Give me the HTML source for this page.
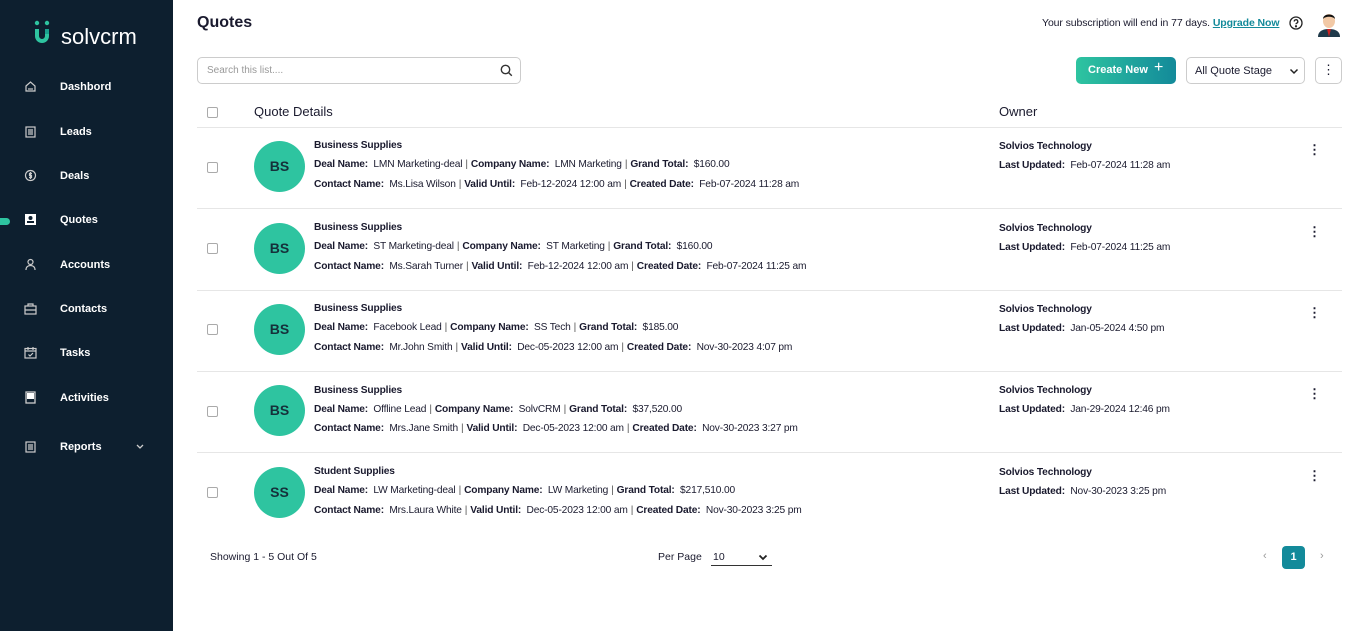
<!DOCTYPE html>
<html><head><meta charset="utf-8"><style>
*{box-sizing:border-box;margin:0;padding:0}
body{width:1364px;height:631px;overflow:hidden;font-family:"Liberation Sans",sans-serif;background:#fff;color:#1a1a2e;position:relative}
.sb{position:absolute;left:0;top:0;width:173px;height:631px;background:#0d1f2f}
.nav{position:absolute;left:0;width:173px;color:#fff;font-size:11px;font-weight:bold}
.nav span.t{position:absolute;left:60px;top:0}
.nav svg{position:absolute;left:24px;top:-1px}
.ind{position:absolute;left:-6px;top:218px;width:16px;height:7px;border-radius:4px;background:#2ec4a0}
.abs{position:absolute}
h1{position:absolute;left:197px;top:14px;font-size:16px;font-weight:bold}
.search{position:absolute;left:197px;top:57px;width:324px;height:27px;border:1px solid #ccc;border-radius:5px;font-size:10px;color:#999;padding:7px 9px}
.btn{position:absolute;left:1076px;top:57px;width:100px;height:27px;border-radius:5px;background:linear-gradient(90deg,#2ec4a0,#138a9a);color:#fff;font-size:11px;font-weight:bold;padding:7px 12px}
.sel{position:absolute;left:1186px;top:57px;width:119px;height:27px;border:1px solid #ccc;border-radius:5px;font-size:11px;padding:7px 8px}
.kb{position:absolute;left:1315px;top:57px;width:27px;height:27px;border:1px solid #ccc;border-radius:5px;text-align:center;font-size:13px;line-height:24px}
.cb{position:absolute;left:207px;width:11px;height:11px;border:1px solid #aaa;border-radius:2px}
.hr{position:absolute;left:197px;width:1145px;height:1px;background:#e6e6e6}
.row{position:absolute;left:0;width:1364px;height:81px}
.av{position:absolute;left:254px;top:14px;width:51px;height:51px;border-radius:50%;background:#2ec4a0;color:#15303a;font-weight:bold;font-size:14px;text-align:center;line-height:51px}
.l{position:absolute;left:314px;font-size:10.2px;white-space:nowrap;letter-spacing:-0.15px}
.sep{color:#555;margin:0 3px}
.o{position:absolute;left:999px;font-size:10.2px;white-space:nowrap;letter-spacing:-0.15px}
.dots{position:absolute;left:1308px;top:15px;font-size:13px;font-weight:bold}
</style></head><body>
<div class="sb">
<svg class="abs" style="left:33px;top:20px" width="20" height="26" viewBox="0 0 20 26"><circle cx="4" cy="3" r="2.2" fill="#2ec4a0"/><circle cx="14" cy="3" r="2.2" fill="#2ec4a0"/><path d="M4 9v7a5 5 0 0 0 10 0v-3" stroke="#2ec4a0" stroke-width="4" fill="none"/><path d="M14 9v5" stroke="#1aa08e" stroke-width="4"/></svg>
<div class="abs" style="left:61px;top:24px;color:#fff;font-size:22px">solvcrm</div>
<div class="ind"></div>
<div class="nav" style="top:81px"><svg width="13" height="13" viewBox="0 0 13 13" fill="none" stroke="#ccc" stroke-width="1.2"><path d="M2 6l4.5-4 4.5 4v5H2z"/><path d="M4 9h5"/></svg><span class="t">Dashbord</span></div>
<div class="nav" style="top:126px"><svg width="13" height="13" viewBox="0 0 13 13" fill="none" stroke="#ccc" stroke-width="1.2"><rect x="2" y="2" width="9" height="10"/><path d="M4 5h5M4 7h5M4 9h5"/></svg><span class="t">Leads</span></div>
<div class="nav" style="top:170px"><svg width="13" height="13" viewBox="0 0 13 13" fill="none" stroke="#ccc" stroke-width="1.2"><circle cx="6.5" cy="6.5" r="5"/><path d="M6.5 3v7M8 4.5H5.5v2h2v2H5"/></svg><span class="t">Deals</span></div>
<div class="nav" style="top:214px"><svg width="13" height="13" viewBox="0 0 13 13"><rect x="1" y="1" width="11" height="11" fill="#fff"/><circle cx="6.5" cy="5" r="2" fill="#0d1f2f"/><rect x="3" y="8" width="7" height="2" fill="#0d1f2f"/></svg><span class="t">Quotes</span></div>
<div class="nav" style="top:259px"><svg width="13" height="13" viewBox="0 0 13 13" fill="none" stroke="#ccc" stroke-width="1.2"><circle cx="6.5" cy="4" r="2.5"/><path d="M2 12c0-3 2-4.5 4.5-4.5S11 9 11 12"/></svg><span class="t">Accounts</span></div>
<div class="nav" style="top:303px"><svg width="13" height="13" viewBox="0 0 13 13" fill="none" stroke="#ccc" stroke-width="1.2"><rect x="1" y="4" width="11" height="8"/><path d="M4 4V2h5v2M1 8h11"/></svg><span class="t">Contacts</span></div>
<div class="nav" style="top:347px"><svg width="13" height="13" viewBox="0 0 13 13" fill="none" stroke="#ccc" stroke-width="1.2"><rect x="1" y="2.5" width="11" height="9.5"/><path d="M1 5h11M4 1v3M9 1v3M4.5 8.5l1.5 1.5 3-3"/></svg><span class="t">Tasks</span></div>
<div class="nav" style="top:392px"><svg width="13" height="13" viewBox="0 0 13 13"><rect x="2" y="1" width="9" height="11" fill="none" stroke="#ccc" stroke-width="1.3"/><rect x="3" y="2" width="7" height="6" fill="#fff"/></svg><span class="t">Activities</span></div>
<div class="nav" style="top:441px"><svg width="13" height="13" viewBox="0 0 13 13" fill="none" stroke="#ccc" stroke-width="1.2"><rect x="2" y="2" width="9" height="10"/><path d="M4 5h5M4 7h5M4 9h5"/></svg><span class="t">Reports</span><svg style="left:135px;top:2px" width="10" height="8" viewBox="0 0 10 8" fill="none" stroke="#ccc" stroke-width="1.3"><path d="M2 2l3 3 3-3"/></svg></div>
</div>

<h1>Quotes</h1>
<div class="abs" style="left:1042px;top:17px;font-size:10.5px;letter-spacing:-0.1px">Your subscription will end in 77 days. <b style="color:#138a9a;text-decoration:underline">Upgrade Now</b></div>
<svg class="abs" style="left:1289px;top:16px" width="14" height="14" viewBox="0 0 14 14" fill="none" stroke="#222" stroke-width="1.3"><circle cx="7" cy="7" r="6"/><path d="M5.2 5.5a1.8 1.8 0 1 1 2.4 1.7c-.5.2-.6.6-.6 1.1"/><circle cx="7" cy="10.3" r=".5" fill="#222"/></svg>
<svg class="abs" style="left:1316px;top:9px" width="26" height="28" viewBox="0 0 26 28"><path d="M2 28c0-6 5-8 11-8s11 2 11 8z" fill="#1f3a4a"/><path d="M11 20l2 8 2-8z" fill="#c22"/><ellipse cx="13" cy="12" rx="6" ry="7" fill="#f2c9a6"/><path d="M7 10c0-6 12-6 12 0-2-3-10-3-12 0z" fill="#111"/></svg>

<div class="search">Search this list....</div>
<svg class="abs" style="left:500px;top:64px" width="13" height="13" viewBox="0 0 13 13" fill="none" stroke="#333" stroke-width="1.4"><circle cx="5.5" cy="5.5" r="4.2"/><path d="M8.6 8.6l3.2 3.2"/></svg>
<div class="btn">Create New <span style="font-weight:normal;font-size:16px;position:absolute;left:78px;top:2px">+</span></div>
<div class="sel">All Quote Stage<svg class="abs" style="left:102px;top:10px" width="10" height="7" viewBox="0 0 10 7" fill="none" stroke="#222" stroke-width="1.5"><path d="M1.5 1.5l3.5 3.5 3.5-3.5"/></svg></div>
<div class="kb">⋮</div>

<div class="cb" style="top:107px"></div>
<div class="abs" style="left:254px;top:104px;font-size:13px">Quote Details</div>
<div class="abs" style="left:999px;top:104px;font-size:13px">Owner</div>
<div class="hr" style="top:127px"></div>

<div class="row" style="top:127px">
<div class="cb" style="top:35px"></div><div class="av">BS</div>
<div class="l" style="top:13px"><b>Business Supplies</b></div>
<div class="l" style="top:32px"><b>Deal Name:</b>&nbsp; LMN Marketing-deal<span class="sep">|</span><b>Company Name:</b>&nbsp; LMN Marketing<span class="sep">|</span><b>Grand Total:</b>&nbsp; $160.00</div>
<div class="l" style="top:52px"><b>Contact Name:</b>&nbsp; Ms.Lisa Wilson<span class="sep">|</span><b>Valid Until:</b>&nbsp; Feb-12-2024 12:00 am<span class="sep">|</span><b>Created Date:</b>&nbsp; Feb-07-2024 11:28 am</div>
<div class="o" style="top:14px"><b>Solvios Technology</b></div>
<div class="o" style="top:33px"><b>Last Updated:</b>&nbsp; Feb-07-2024 11:28 am</div>
<div class="dots">⋮</div></div>
<div class="hr" style="top:208px"></div>

<div class="row" style="top:209px">
<div class="cb" style="top:34px"></div><div class="av">BS</div>
<div class="l" style="top:13px"><b>Business Supplies</b></div>
<div class="l" style="top:32px"><b>Deal Name:</b>&nbsp; ST Marketing-deal<span class="sep">|</span><b>Company Name:</b>&nbsp; ST Marketing<span class="sep">|</span><b>Grand Total:</b>&nbsp; $160.00</div>
<div class="l" style="top:52px"><b>Contact Name:</b>&nbsp; Ms.Sarah Turner<span class="sep">|</span><b>Valid Until:</b>&nbsp; Feb-12-2024 12:00 am<span class="sep">|</span><b>Created Date:</b>&nbsp; Feb-07-2024 11:25 am</div>
<div class="o" style="top:14px"><b>Solvios Technology</b></div>
<div class="o" style="top:33px"><b>Last Updated:</b>&nbsp; Feb-07-2024 11:25 am</div>
<div class="dots">⋮</div></div>
<div class="hr" style="top:290px"></div>

<div class="row" style="top:290px">
<div class="cb" style="top:34px"></div><div class="av">BS</div>
<div class="l" style="top:13px"><b>Business Supplies</b></div>
<div class="l" style="top:32px"><b>Deal Name:</b>&nbsp; Facebook Lead<span class="sep">|</span><b>Company Name:</b>&nbsp; SS Tech<span class="sep">|</span><b>Grand Total:</b>&nbsp; $185.00</div>
<div class="l" style="top:52px"><b>Contact Name:</b>&nbsp; Mr.John Smith<span class="sep">|</span><b>Valid Until:</b>&nbsp; Dec-05-2023 12:00 am<span class="sep">|</span><b>Created Date:</b>&nbsp; Nov-30-2023 4:07 pm</div>
<div class="o" style="top:14px"><b>Solvios Technology</b></div>
<div class="o" style="top:33px"><b>Last Updated:</b>&nbsp; Jan-05-2024 4:50 pm</div>
<div class="dots">⋮</div></div>
<div class="hr" style="top:371px"></div>

<div class="row" style="top:371px">
<div class="cb" style="top:35px"></div><div class="av">BS</div>
<div class="l" style="top:14px"><b>Business Supplies</b></div>
<div class="l" style="top:33px"><b>Deal Name:</b>&nbsp; Offline Lead<span class="sep">|</span><b>Company Name:</b>&nbsp; SolvCRM<span class="sep">|</span><b>Grand Total:</b>&nbsp; $37,520.00</div>
<div class="l" style="top:52px"><b>Contact Name:</b>&nbsp; Mrs.Jane Smith<span class="sep">|</span><b>Valid Until:</b>&nbsp; Dec-05-2023 12:00 am<span class="sep">|</span><b>Created Date:</b>&nbsp; Nov-30-2023 3:27 pm</div>
<div class="o" style="top:14px"><b>Solvios Technology</b></div>
<div class="o" style="top:33px"><b>Last Updated:</b>&nbsp; Jan-29-2024 12:46 pm</div>
<div class="dots">⋮</div></div>
<div class="hr" style="top:452px"></div>

<div class="row" style="top:453px">
<div class="cb" style="top:34px"></div><div class="av">SS</div>
<div class="l" style="top:13px"><b>Student Supplies</b></div>
<div class="l" style="top:32px"><b>Deal Name:</b>&nbsp; LW Marketing-deal<span class="sep">|</span><b>Company Name:</b>&nbsp; LW Marketing<span class="sep">|</span><b>Grand Total:</b>&nbsp; $217,510.00</div>
<div class="l" style="top:52px"><b>Contact Name:</b>&nbsp; Mrs.Laura White<span class="sep">|</span><b>Valid Until:</b>&nbsp; Dec-05-2023 12:00 am<span class="sep">|</span><b>Created Date:</b>&nbsp; Nov-30-2023 3:25 pm</div>
<div class="o" style="top:14px"><b>Solvios Technology</b></div>
<div class="o" style="top:33px"><b>Last Updated:</b>&nbsp; Nov-30-2023 3:25 pm</div>
<div class="dots">⋮</div></div>

<div class="abs" style="left:210px;top:551px;font-size:10.5px">Showing 1 - 5 Out Of 5</div>
<div class="abs" style="left:658px;top:551px;font-size:10.5px">Per Page</div>
<div class="abs" style="left:711px;top:549px;width:61px;height:17px;border-bottom:1px solid #333;font-size:10.5px;padding-top:2px;padding-left:2px">10<svg class="abs" style="left:47px;top:5px" width="10" height="7" viewBox="0 0 10 7" fill="none" stroke="#222" stroke-width="1.8"><path d="M1.5 1.5l3.5 3.5 3.5-3.5"/></svg></div>
<div class="abs" style="left:1263px;top:550px;font-size:11px;color:#999">‹</div>
<div class="abs" style="left:1282px;top:546px;width:23px;height:23px;border-radius:4px;background:#138a9a;color:#fff;font-size:11px;font-weight:bold;text-align:center;line-height:23px">1</div>
<div class="abs" style="left:1320px;top:550px;font-size:11px;color:#999">›</div>
</body></html>
